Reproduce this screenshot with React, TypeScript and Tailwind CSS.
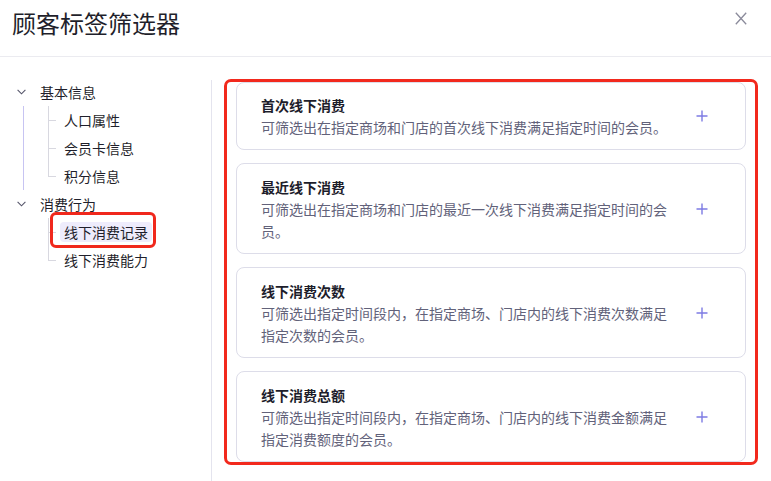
import { ReactNode } from "react";

type TreeGroup = {
  label: string;
  accent: boolean;
  children: string[];
};

const groups: TreeGroup[] = [
  { label: "基本信息", accent: true, children: ["人口属性", "会员卡信息", "积分信息"] },
  { label: "消费行为", accent: false, children: ["线下消费记录", "线下消费能力"] },
];

const cards = [
  {
    title: "首次线下消费",
    desc: "可筛选出在指定商场和门店的首次线下消费满足指定时间的会员。",
  },
  {
    title: "最近线下消费",
    desc: "可筛选出在指定商场和门店的最近一次线下消费满足指定时间的会员。",
  },
  {
    title: "线下消费次数",
    desc: "可筛选出指定时间段内，在指定商场、门店内的线下消费次数满足指定次数的会员。",
  },
  {
    title: "线下消费总额",
    desc: "可筛选出指定时间段内，在指定商场、门店内的线下消费金额满足指定消费额度的会员。",
  },
];

const SELECTED = "线下消费记录";

function Chevron() {
  return (
    <svg width="9" height="6" viewBox="0 0 9 6" fill="none">
      <polyline points="0.6,0.8 4.5,4.8 8.4,0.8" stroke="#55556a" strokeWidth="1.1" />
    </svg>
  );
}

function Plus() {
  return (
    <svg width="12" height="12" viewBox="0 0 12 12" fill="none">
      <path d="M6 0.5V11.5M0.5 6H11.5" stroke="#7d7be3" strokeWidth="1.4" />
    </svg>
  );
}

function Close() {
  return (
    <svg width="12" height="13" viewBox="0 0 12 13" fill="none">
      <path d="M0.8 0.8L11.2 12.2M11.2 0.8L0.8 12.2" stroke="#8b8b9b" strokeWidth="1.3" />
    </svg>
  );
}

function ChildRow({ label, last }: { label: string; last: boolean }): ReactNode {
  const selected = label === SELECTED;
  return (
    <div className="flex h-7 items-stretch pl-[24px]">
      <div className="flex w-[8px] flex-col">
        <div className="flex-1 border-b border-l border-[#d8d8e0]" />
        <div className={`flex-1 border-l ${last ? "border-transparent" : "border-[#d8d8e0]"}`} />
      </div>
      <div
        className={`relative ml-[4px] h-5 self-center rounded px-[4px] leading-5 ${
          selected ? "bg-[#eeecfc]" : ""
        }`}
      >
        {label}
        {selected && (
          <div className="absolute -bottom-[6px] -left-[10px] -right-[4px] -top-[10px] rounded-[6px] border-[3px] border-[#f0281c]" />
        )}
      </div>
    </div>
  );
}

export default function App() {
  return (
    <div
      className="flex h-[481px] w-[771px] flex-col overflow-hidden bg-white text-[#1f1f2b]"
      style={{ fontFamily: '"Noto Sans CJK SC", "Noto Sans", sans-serif' }}
    >
      <div className="flex h-[57px] shrink-0 items-start justify-between border-b border-[#ebebf0]">
        <div className="ml-[12px] pt-[7px] text-[24px] leading-[32px]">顾客标签筛选器</div>
        <div className="mr-[24px] mt-[12px]">
          <Close />
        </div>
      </div>

      <div className="flex flex-1">
        <div className="w-[211px] shrink-0 pt-[21px] text-[14px]">
          {groups.map((g) => (
            <div key={g.label}>
              <div className="flex h-7 items-center pl-[17px]">
                <Chevron />
                <span className="ml-[14px]">{g.label}</span>
              </div>
              <div
                className={`ml-[23px] border-l ${
                  g.accent ? "border-[#c7c4f2]" : "border-transparent"
                }`}
              >
                {g.children.map((c, i) => (
                  <ChildRow key={c} label={c} last={i === g.children.length - 1} />
                ))}
              </div>
            </div>
          ))}
        </div>

        <div className="mt-[23px] w-px shrink-0 bg-[#e4e4ee]" />

        <div className="flex-1 pl-[12px] pr-[13px] pt-[22px]">
          <div className="flex flex-col gap-[13px] rounded-[7px] border-[3px] border-[#f2291d] px-[9px]">
            {cards.map((c, i) => (
              <div
                key={c.title}
                className={`flex items-center rounded-lg border border-[#dddde9] bg-white pb-[11px] pl-[24px] ${
                  i === 0 ? "pt-[11px]" : "pt-[12px]"
                }`}
              >
                <div className="w-[412px] text-[14px] leading-[22px]">
                  <div className="font-semibold text-[#1d1d2b]">{c.title}</div>
                  <div className="text-[#62627a]">{c.desc}</div>
                </div>
                <div className="ml-[23px] flex">
                  <Plus />
                </div>
              </div>
            ))}
          </div>
        </div>
      </div>
    </div>
  );
}
